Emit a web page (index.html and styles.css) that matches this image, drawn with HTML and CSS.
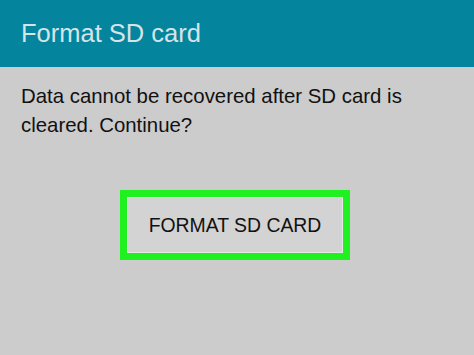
FILE: index.html
```html
<!DOCTYPE html>
<html>
<head>
<meta charset="utf-8">
<link rel="stylesheet" href="styles.css">
</head>
<body>
<div class="screen">
  <header class="bar"><h1 class="title">Format SD card</h1></header>
  <main class="content">
    <p class="message">Data cannot be recovered after SD card is cleared. Continue?</p>
    <div class="actions">
      <div class="highlight"><button class="btn">FORMAT SD CARD</button></div>
    </div>
  </main>
</div>
</body>
</html>
```
FILE: styles.css
```css
html, body {
  margin: 0;
  padding: 0;
}
body {
  width: 474px;
  height: 355px;
  overflow: hidden;
  background: #cccccc;
  font-family: "Liberation Sans", Arial, sans-serif;
}
.screen {
  display: flex;
  flex-direction: column;
  height: 355px;
}
.bar {
  height: 67px;
  background: #04849d;
  display: flex;
  align-items: center;
  padding-left: 21px;
  box-sizing: border-box;
}
.title {
  margin: 0;
  font-weight: normal;
  font-size: 25.5px;
  color: #d6e4e8;
  line-height: 30px;
  margin-top: -2px;
}
.content {
  flex: 1;
  background: #cccccc;
  padding: 0 21px;
}
.message {
  margin: 15px 0 0 0;
  font-size: 20.4px;
  line-height: 29px;
  color: #111111;
  width: 400px;
}
.actions {
  display: flex;
  justify-content: flex-start;
  margin-top: 50px;
}
.highlight {
  background: #1ff01f;
  padding: 7px;
  width: 230px;
  height: 70px;
  box-sizing: border-box;
  margin-left: 99px;
}
.btn {
  width: 100%;
  height: 100%;
  box-sizing: border-box;
  border: 1px solid #e6e6e6;
  background: #d3d3d3;
  font-family: "Liberation Sans", Arial, sans-serif;
  font-size: 19.4px;
  color: #111111;
  padding: 0;
  margin: 0;
  display: block;
}
```
